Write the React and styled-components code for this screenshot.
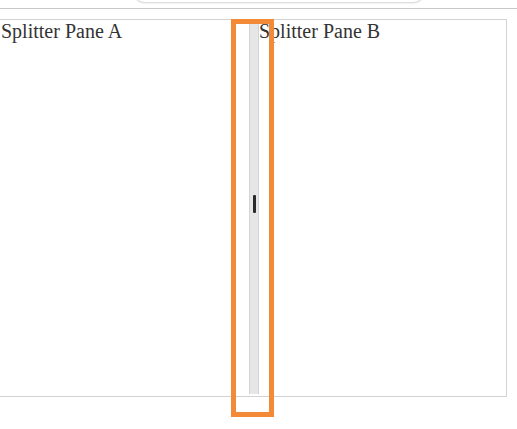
import React from "react";
import styled, { createGlobalStyle } from "styled-components";

const GlobalStyle = createGlobalStyle`
  html, body {
    margin: 0;
    padding: 0;
    background: #fff;
  }
  body {
    min-height: 429px;
    font-family: "Liberation Serif", "Times New Roman", serif;
  }
`;

const TopBar = styled.div`
  height: 8px;
  border-bottom: 1px solid #c9c9c9;
  overflow: hidden;
`;

const SearchPill = styled.div`
  width: 292px;
  height: 30px;
  margin: -28px 0 0 133px;
  border-radius: 12px;
  background: #fff;
  box-shadow: 0 1px 2px rgba(0, 0, 0, 0.18);
`;

const SplitterBox = styled.div`
  display: flex;
  width: 506px;
  height: 376px;
  margin: 10px 0 0 -1px;
  border: 1px solid #d2d2d2;
`;

const Pane = styled.div`
  width: ${(p) => p.$width || "auto"};
  flex: ${(p) => (p.$width ? "none" : "1")};
  padding-left: ${(p) => p.$pad || "0"};
  font-size: 20px;
  line-height: 23px;
  color: #333;
`;

const Bar = styled.div`
  position: relative;
  width: 8px;
  margin: 0 0 2px;
  background: #e6e6e6;
  border-left: 1px solid #d4d4d4;
  border-right: 1px solid #d4d4d4;
  display: flex;
  align-items: center;
  justify-content: center;
`;

const Grip = styled.span`
  width: 3px;
  height: 18px;
  margin-top: -6px;
  border-radius: 1px;
  background: #2b2b2b;
`;

const Highlight = styled.div`
  position: absolute;
  left: -19px;
  top: -1px;
  width: 33px;
  height: 388px;
  border: 5px solid #f28a37;
  pointer-events: none;
`;

export default function App() {
  return (
    <>
      <GlobalStyle />
      <TopBar>
        <SearchPill />
      </TopBar>
      <SplitterBox>
        <Pane $width="248px" $pad="1px">Splitter Pane A</Pane>
        <Bar>
          <Grip />
          <Highlight />
        </Bar>
        <Pane>Splitter Pane B</Pane>
      </SplitterBox>
    </>
  );
}
